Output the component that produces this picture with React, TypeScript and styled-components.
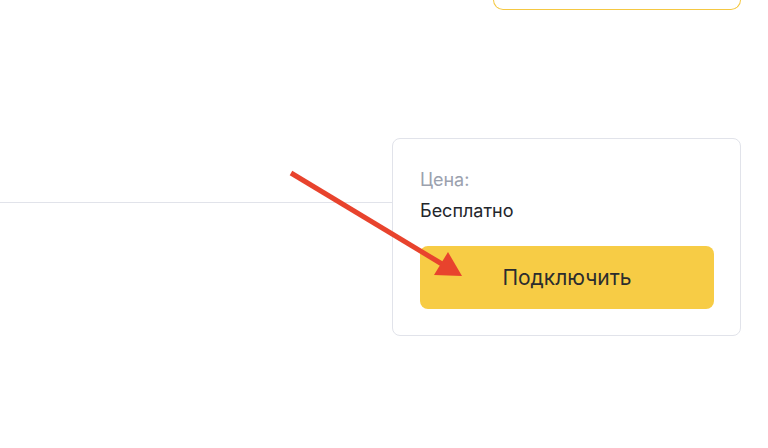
import React from "react";
import styled, { createGlobalStyle } from "styled-components";

const Global = createGlobalStyle`
  html, body { margin: 0; padding: 0; background: #ffffff; }
  body { font-family: Inter, "Noto Sans", "Liberation Sans", sans-serif; }
  #root { position: relative; width: 768px; height: 448px; overflow: hidden; }
`;

const Page = styled.div`
  display: flex;
  flex-direction: column;
  padding-right: 27px;
  width: 768px;
  height: 448px;
  box-sizing: border-box;
`;

const TopBox = styled.div`
  align-self: flex-end;
  width: 248px;
  height: 10px;
  box-sizing: border-box;
  border: 1.5px solid #f5c842;
  border-top: none;
  border-radius: 0 0 10px 10px;
`;

const Row = styled.div`
  display: flex;
  align-items: flex-start;
  margin-top: 128px;
`;

const LeftArea = styled.div`
  flex: 1;
  padding-top: 64px;
`;

const Divider = styled.div`
  height: 1px;
  background: #e1e3ea;
`;

const Card = styled.div`
  width: 349px;
  height: 198px;
  box-sizing: border-box;
  border: 1px solid #e1e3ea;
  border-radius: 8px;
  padding: 30px 26px 26px 27px;
  display: flex;
  flex-direction: column;
`;

const Label = styled.div`
  font-size: 18px;
  line-height: 22px;
  color: #9ba1ae;
`;

const Value = styled.div`
  font-size: 18px;
  line-height: 22px;
  color: #23262b;
  margin-top: 9px;
`;

const Button = styled.button`
  margin-top: 24px;
  height: 64px;
  width: 100%;
  border: none;
  border-radius: 8px;
  background: #f7cc45;
  color: #2b2c2e;
  font-family: inherit;
  font-size: 21px;
  font-weight: 400;
  padding: 0;
  cursor: pointer;
`;

const ArrowLayer = styled.svg`
  position: absolute;
  left: 0;
  top: 0;
  pointer-events: none;
`;

export default function App() {
  return (
    <>
      <Global />
      <Page>
        <TopBox />
        <Row>
          <LeftArea>
            <Divider />
          </LeftArea>
          <Card>
            <Label>Цена:</Label>
            <Value>Бесплатно</Value>
            <Button>Подключить</Button>
          </Card>
        </Row>
      </Page>
      <ArrowLayer width="768" height="448" viewBox="0 0 768 448">
        <line x1="291" y1="173" x2="442" y2="264" stroke="#e8432d" strokeWidth="5" strokeLinecap="butt" />
        <polygon points="448,252 434,275 462,276" fill="#e8432d" />
      </ArrowLayer>
    </>
  );
}
